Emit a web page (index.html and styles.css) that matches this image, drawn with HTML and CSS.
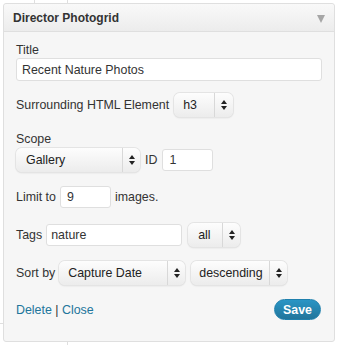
FILE: index.html
```html
<!DOCTYPE html>
<html lang="en">
<head>
    <meta charset="UTF-8">
    <title>Director Photogrid</title>
    <link rel="stylesheet" href="styles.css">
</head>
<body>
    <div class="line line-top-a"></div>
    <div class="line line-top-b"></div>
    <div class="line line-bottom"></div>
    <div class="line line-left"></div>
    <div class="widget">
        <div class="widget-top">
            <h3>Director Photogrid</h3>
            <span class="toggle"></span>
        </div>
        <div class="widget-inside">
            <div class="field f-title">
                <label class="block">Title</label>
                <input type="text" class="text wide" value="Recent Nature Photos">
            </div>
            <div class="field f-element row">
                <label>Surrounding HTML Element</label>
                <span class="select w-h3"><span class="val">h3</span><span class="arrows"></span></span>
            </div>
            <div class="field f-scope">
                <label class="block">Scope</label>
                <div class="row">
                    <span class="select w-gallery"><span class="val">Gallery</span><span class="arrows"></span></span>
                    <label>ID</label>
                    <input type="text" class="text w-id" value="1">
                </div>
            </div>
            <div class="field f-limit row">
                <label>Limit to</label>
                <input type="text" class="text w-limit" value="9">
                <label>images.</label>
            </div>
            <div class="field f-tags row">
                <label>Tags</label>
                <input type="text" class="text w-tags" value="nature">
                <span class="select w-all"><span class="val">all</span><span class="arrows"></span></span>
            </div>
            <div class="field f-sort row">
                <label>Sort by</label>
                <span class="select w-sort"><span class="val">Capture Date</span><span class="arrows"></span></span>
                <span class="select w-order"><span class="val">descending</span><span class="arrows"></span></span>
            </div>
            <div class="actions">
                <div class="links"><a href="#">Delete</a> | <a href="#">Close</a></div>
                <button type="button" class="btn-save">Save</button>
            </div>
        </div>
    </div>
</body>
</html>
```
FILE: styles.css
```css
body {
    margin: 0;
    background-color: #fff;
    font-family: 'Liberation Sans', Arial, sans-serif;
    font-size: 12.4px;
    line-height: 14px;
    color: #333;
    position: relative;
    height: 345px;
    overflow: hidden;
}
.line {
    position: absolute;
    background-color: #dfdfdf;
}
.line-top-a { left: 34px; top: 0; width: 1px; height: 4px; }
.line-top-b { left: 67px; top: 0; width: 1px; height: 4px; }
.line-bottom { left: 67px; top: 341px; width: 1px; height: 4px; }
.line-left { left: 0; top: 323px; width: 3px; height: 1px; }
.widget {
    position: relative;
    margin: 3px 0 0 3px;
    width: 330px;
    height: 337px;
    border: 1px solid #dfdfdf;
    border-radius: 3px;
    background-color: #f6f6f6;
}
.widget-top {
    display: flex;
    align-items: center;
    justify-content: space-between;
    height: 27px;
    padding: 0 9px 0 9px;
    background: linear-gradient(to bottom, #f9f9f9, #ececec);
    border-bottom: 1px solid #dfdfdf;
    border-radius: 3px 3px 0 0;
}
.widget-top h3 {
    margin: 0;
    font-size: 12px;
    font-weight: bold;
    color: #333;
}
.toggle {
    width: 0;
    height: 0;
    border-left: 4px solid transparent;
    border-right: 4px solid transparent;
    border-top: 8px solid #a6a6a6;
    margin-top: 3px;
}
.widget-inside {
    padding: 11px 12px 0 12px;
}
.f-title { margin-bottom: 12px; }
.f-element { margin-bottom: 15px; }
.f-scope { margin-bottom: 14px; }
.f-limit { margin-bottom: 15px; }
.f-tags { margin-bottom: 14px; }
.row {
    display: flex;
    align-items: center;
    gap: 4px;
}
.f-scope .row {
    gap: 5px;
}
label {
    color: #333;
}
.block {
    display: block;
    margin-bottom: 1px;
}
.f-scope .block {
    margin-bottom: 2px;
}
.text {
    box-sizing: border-box;
    height: 22px;
    padding: 2px 5px;
    border: 1px solid #dfdfdf;
    border-radius: 3px;
    background-color: #fff;
    font-family: inherit;
    font-size: 12.4px;
    color: #333;
    outline: none;
}
.wide { width: 306px; height: 23px; }
.w-id { width: 51px; padding-left: 6px; }
.w-limit { width: 51px; padding-left: 6px; }
.w-tags { width: 136px; padding-left: 4px; }
.select {
    box-sizing: border-box;
    display: inline-flex;
    align-items: stretch;
    height: 24px;
    border-radius: 6px;
    background: linear-gradient(to bottom, #fdfdfd, #ececec);
    box-shadow: 0 0 0 1px #e4e4e4, 0 1px 2px rgba(0, 0, 0, 0.12);
    color: #222;
}
.select .val {
    flex: 1;
    display: flex;
    align-items: center;
    padding-left: 9px;
}
.select .arrows {
    position: relative;
    width: 17px;
    border-left: 1px solid #d8d8d8;
}
.select .arrows::before, .select .arrows::after {
    content: '';
    position: absolute;
    left: 6px;
    border-left: 3px solid transparent;
    border-right: 3px solid transparent;
}
.select .arrows::before {
    top: 7px;
    border-bottom: 4px solid #222;
}
.select .arrows::after {
    top: 13px;
    border-top: 4px solid #222;
}
.w-h3 { width: 59px; margin-left: 1px; }
.w-h3 .arrows { width: 18px; }
.w-gallery { width: 124px; }
.w-gallery .val { padding-left: 10px; }
.w-all { width: 52px; margin-left: 2px; }
.w-all .val { padding-left: 10px; }
.w-sort { width: 126px; }
.w-order { width: 96px; margin-left: 2px; }
.w-order .val { padding-left: 8px; }
.actions {
    display: flex;
    justify-content: space-between;
    align-items: center;
    margin-top: 14px;
}
.links {
    color: #333;
    padding-top: 1px;
}
.links a {
    color: #21759b;
    text-decoration: none;
}
.btn-save {
    width: 47px;
    height: 21px;
    margin-right: 1px;
    padding: 0;
    border: 1px solid #1f80ad;
    border-radius: 11px;
    background: linear-gradient(to bottom, #2a95c5, #21759b);
    color: #fff;
    font-family: inherit;
    font-size: 12.4px;
    font-weight: bold;
    cursor: pointer;
}
```
